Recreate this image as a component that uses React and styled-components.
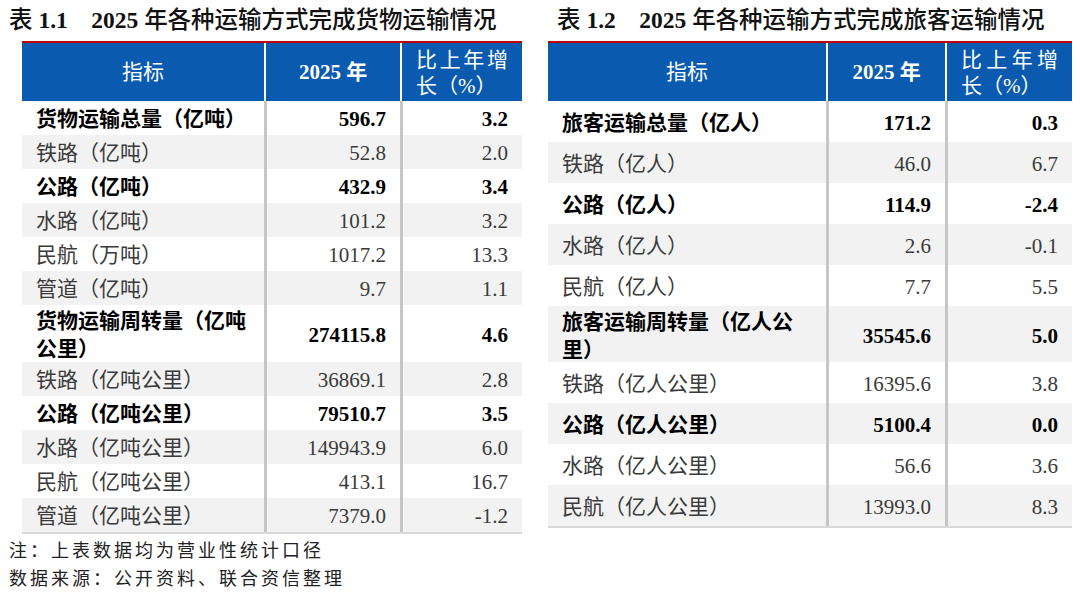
import React from 'react';
import styled, { createGlobalStyle } from 'styled-components';

const GlobalStyle = createGlobalStyle`
  html, body {
    margin: 0;
    padding: 0;
    background: #fff;
  }
  body {
    font-family: "Liberation Serif", "Noto Sans CJK SC", serif;
    color: #222;
  }
`;

const FONT = `"Liberation Serif", "Noto Sans CJK SC", serif`;

const Page = styled.div`
  display: flex;
  align-items: flex-start;
  gap: 26px;
  padding-left: 9px;
  width: 1080px;
  height: 592px;
  box-sizing: border-box;
  overflow: hidden;
`;

const Panel = styled.section`
  display: flex;
  flex-direction: column;
`;

const Title = styled.h2`
  margin: 0;
  padding-left: ${(p) => p.$indent || 0}px;
  height: 41px;
  line-height: 41px;
  font-family: ${FONT};
  font-size: 23.5px;
  font-weight: 500;
  color: #111;
  white-space: nowrap;

  b {
    font-weight: 700;
  }
`;

const Table = styled.div`
  margin-left: ${(p) => p.$indent || 0}px;
  width: ${(p) => p.$width}px;
  border-top: 2px solid #c00000;
  border-bottom: 2px solid #d9d9d9;
`;

const Row = styled.div`
  display: grid;
  grid-template-columns: ${(p) => p.$cols};
  height: ${(p) => p.$h}px;
  background: ${(p) => (p.$stripe ? '#f2f2f2' : '#fff')};
`;

const HeadRow = styled(Row)`
  height: 58px;
  background: #0a5bb0;
`;

const HeadCell = styled.div`
  display: flex;
  align-items: center;
  justify-content: ${(p) => (p.$wrap ? 'flex-start' : 'center')};
  padding: 0 14px;
  border-left: ${(p) => (p.$first ? 'none' : '2px solid #fff')};
  font-family: ${FONT};
  font-size: 21px;
  line-height: 26px;
  color: #fff;
  font-weight: ${(p) => (p.$bold ? 700 : 400)};

  span {
    display: block;
    width: 100%;
    text-align: justify;
    text-align-last: left;
    padding-top: 2px;
  }
`;

const Cell = styled.div`
  display: flex;
  align-items: center;
  justify-content: ${(p) => (p.$num ? 'flex-end' : 'flex-start')};
  padding: 2px 14px 0;
  border-left: ${(p) => (p.$first ? 'none' : '3px solid #c6c6c6')};
  font-family: ${FONT};
  font-size: 21px;
  line-height: 28px;
  font-weight: ${(p) => (p.$bold ? 700 : 400)};
  color: ${(p) => (p.$bold ? '#000' : '#3a3a3a')};
`;

const Notes = styled.div`
  font-family: "Noto Sans CJK SC", sans-serif;
  font-size: 18px;
  line-height: 28px;
  letter-spacing: 3px;
  color: #222;
  padding-top: 1px;
`;

const freight = [
  ['货物运输总量（亿吨）', '596.7', '3.2', true],
  ['铁路（亿吨）', '52.8', '2.0'],
  ['公路（亿吨）', '432.9', '3.4', true],
  ['水路（亿吨）', '101.2', '3.2'],
  ['民航（万吨）', '1017.2', '13.3'],
  ['管道（亿吨）', '9.7', '1.1'],
  ['货物运输周转量（亿吨公里）', '274115.8', '4.6', true, true],
  ['铁路（亿吨公里）', '36869.1', '2.8'],
  ['公路（亿吨公里）', '79510.7', '3.5', true],
  ['水路（亿吨公里）', '149943.9', '6.0'],
  ['民航（亿吨公里）', '413.1', '16.7'],
  ['管道（亿吨公里）', '7379.0', '-1.2'],
];

const passenger = [
  ['旅客运输总量（亿人）', '171.2', '0.3', true],
  ['铁路（亿人）', '46.0', '6.7'],
  ['公路（亿人）', '114.9', '-2.4', true],
  ['水路（亿人）', '2.6', '-0.1'],
  ['民航（亿人）', '7.7', '5.5'],
  ['旅客运输周转量（亿人公里）', '35545.6', '5.0', true, true],
  ['铁路（亿人公里）', '16395.6', '3.8'],
  ['公路（亿人公里）', '5100.4', '0.0', true],
  ['水路（亿人公里）', '56.6', '3.6'],
  ['民航（亿人公里）', '13993.0', '8.3'],
];

const DataTable = ({ rows, cols, width, indent, rowH, tallH }) => (
  <Table $width={width} $indent={indent}>
    <HeadRow $cols={cols}>
      <HeadCell $first>指标</HeadCell>
      <HeadCell $bold>2025 年</HeadCell>
      <HeadCell $wrap>
        <span>比上年增长（%）</span>
      </HeadCell>
    </HeadRow>
    {rows.map(([name, value, growth, bold, tall], i) => (
      <Row key={name} $cols={cols} $h={tall ? tallH : rowH} $stripe={i % 2 === 1}>
        <Cell $first $bold={bold}>{name}</Cell>
        <Cell $num $bold={bold}>{value}</Cell>
        <Cell $num $bold={bold}>{growth}</Cell>
      </Row>
    ))}
  </Table>
);

export default function App() {
  return (
    <>
      <GlobalStyle />
      <Page>
        <Panel>
          <Title>
            表 <b>1.1</b>{'\u3000'}<b>2025</b> 年各种运输方式完成货物运输情况
          </Title>
          <DataTable
            rows={freight}
            cols="242px 136px 122px"
            width={500}
            indent={13}
            rowH={34}
            tallH={57}
          />
          <Notes>
            <div>注：上表数据均为营业性统计口径</div>
            <div>数据来源：公开资料、联合资信整理</div>
          </Notes>
        </Panel>
        <Panel>
          <Title $indent={9}>
            表 <b>1.2</b>{'\u3000'}<b>2025</b> 年各种运输方式完成旅客运输情况
          </Title>
          <DataTable
            rows={passenger}
            cols="278px 119px 127px"
            width={524}
            rowH={41}
            tallH={56}
          />
        </Panel>
      </Page>
    </>
  );
}
